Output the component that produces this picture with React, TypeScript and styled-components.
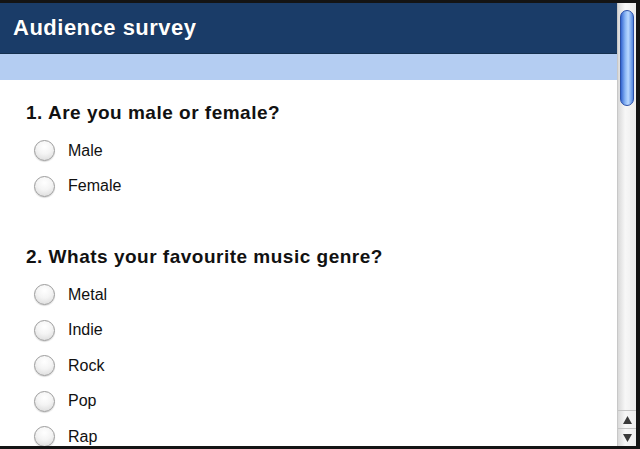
import styled, { createGlobalStyle } from "styled-components"

const GlobalStyle = createGlobalStyle`
    html, body {
        margin: 0;
        padding: 0;
        background: #141414;
    }
`

const Frame = styled.div`
    width: 640px;
    height: 449px;
    box-sizing: border-box;
    padding: 3px 4px 3px 0;
    background: #141414;
    display: flex;
`

const Page = styled.div`
    flex: 1;
    background: #fff;
    overflow: hidden;
    font-family: "Liberation Sans", Arial, sans-serif;
`

const Header = styled.div`
    height: 51px;
    background: #1a3c68;
    border-bottom: 1px solid #14304f;
    color: #fff;
    font-weight: bold;
    font-size: 22px;
    letter-spacing: 0.5px;
    display: flex;
    align-items: center;
    padding-left: 13px;
    box-sizing: border-box;
    text-shadow: 0 0 1px rgba(0, 0, 0, 0.4);
`

const SubBar = styled.div`
    height: 26px;
    background: #b4cdf2;
`

const Body = styled.div`
    padding: 21px 26px 0;
`

const Question = styled.div`
    margin-bottom: 41px;
`

const QuestionTitle = styled.h2`
    margin: 0 0 8px;
    font-size: 19px;
    letter-spacing: 0.5px;
    font-weight: bold;
    color: #111;
    line-height: 24px;
`

const Option = styled.label`
    display: flex;
    align-items: center;
    height: 35.5px;
    padding-left: 8px;
    gap: 13px;
    font-size: 16px;
    color: #111;
`

const Radio = styled.span`
    width: 21px;
    height: 21px;
    border-radius: 50%;
    box-sizing: border-box;
    border: 1px solid #9c9c9c;
    background: radial-gradient(circle at 50% 30%, #ffffff 0%, #f4f4f4 45%, #d6d6d6 100%);
    box-shadow: 0 1px 1px rgba(0, 0, 0, 0.15);
`

const Scrollbar = styled.div`
    width: 19px;
    background: linear-gradient(to right, #d9d9d9, #f7f7f7 40%, #ededed);
    display: flex;
    flex-direction: column;
    border-left: 1px solid #c8c8c8;
    box-sizing: border-box;
`

const Thumb = styled.div`
    margin: 7px 2px 0 2px;
    height: 94px;
    border-radius: 8px;
    border: 1px solid #2a4fa8;
    background: linear-gradient(to right, #3566d0, #8ab6f5 35%, #b9d8ff 60%, #4f84e0);
`

const Track = styled.div`
    flex: 1;
`

const ArrowButton = styled.div`
    height: 17px;
    display: flex;
    align-items: center;
    justify-content: center;
    border-top: 1px solid #c4c4c4;
`

const options1 = ["Male", "Female"]
const options2 = ["Metal", "Indie", "Rock", "Pop", "Rap"]

function App() {
    return (
        <Frame>
            <GlobalStyle />
            <Page>
                <Header>Audience survey</Header>
                <SubBar />
                <Body>
                    <Question>
                        <QuestionTitle>1. Are you male or female?</QuestionTitle>
                        {options1.map(o => (
                            <Option key={o}><Radio />{o}</Option>
                        ))}
                    </Question>
                    <Question>
                        <QuestionTitle>2. Whats your favourite music genre?</QuestionTitle>
                        {options2.map(o => (
                            <Option key={o}><Radio />{o}</Option>
                        ))}
                    </Question>
                </Body>
            </Page>
            <Scrollbar>
                <Thumb />
                <Track />
                <ArrowButton>
                    <svg width="9" height="8" viewBox="0 0 9 8"><path d="M4.5 0L9 8H0z" fill="#3a3a3a" /></svg>
                </ArrowButton>
                <ArrowButton>
                    <svg width="9" height="8" viewBox="0 0 9 8"><path d="M0 0H9L4.5 8z" fill="#3a3a3a" /></svg>
                </ArrowButton>
            </Scrollbar>
        </Frame>
    )
}

export default App
